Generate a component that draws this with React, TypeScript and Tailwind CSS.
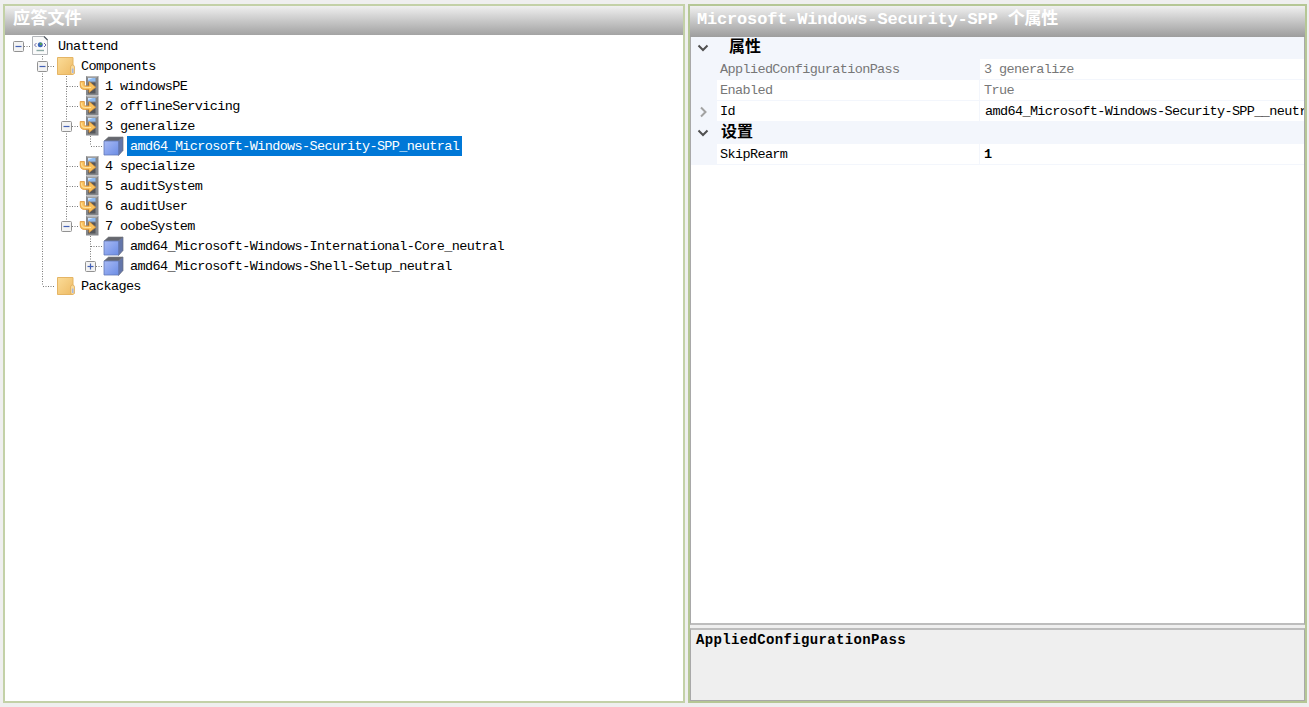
import React from "react";

type Kind = "file" | "folder" | "pass" | "cube";
type Row = {
  label: string;
  icon: Kind;
  /** one entry per 24px gutter column: v = through line, t = tee, l = corner, h = horizontal only */
  cols: string[];
  box?: "-" | "+";
  selected?: boolean;
};

const rows: Row[] = [
  { label: "Unattend", icon: "file", cols: ["h"], box: "-" },
  { label: "Components", icon: "folder", cols: ["", "t"], box: "-" },
  { label: "1 windowsPE", icon: "pass", cols: ["", "v", "t"] },
  { label: "2 offlineServicing", icon: "pass", cols: ["", "v", "t"] },
  { label: "3 generalize", icon: "pass", cols: ["", "v", "t"], box: "-" },
  { label: "amd64_Microsoft-Windows-Security-SPP_neutral", icon: "cube", cols: ["", "v", "v", "l"], selected: true },
  { label: "4 specialize", icon: "pass", cols: ["", "v", "t"] },
  { label: "5 auditSystem", icon: "pass", cols: ["", "v", "t"] },
  { label: "6 auditUser", icon: "pass", cols: ["", "v", "t"] },
  { label: "7 oobeSystem", icon: "pass", cols: ["", "v", "l"], box: "-" },
  { label: "amd64_Microsoft-Windows-International-Core_neutral", icon: "cube", cols: ["", "v", "", "t"] },
  { label: "amd64_Microsoft-Windows-Shell-Setup_neutral", icon: "cube", cols: ["", "v", "", "l"], box: "+" },
  { label: "Packages", icon: "folder", cols: ["", "l"] },
];

function Gutter({ kind, box }: { kind: string; box?: "-" | "+" }) {
  const line = { stroke: "#777", strokeWidth: 1, strokeDasharray: "1 1.5" };
  return (
    <svg width="24" height="20" className="block shrink-0">
      {(kind === "v" || kind === "t") && <line x1="11.5" y1="0" x2="11.5" y2="20" {...line} />}
      {kind === "l" && <line x1="11.5" y1="0" x2="11.5" y2="10" {...line} />}
      {kind !== "" && kind !== "v" && <line x1="12" y1="10.5" x2="26" y2="10.5" {...line} />}
      {box && (
        <g>
          <rect x="6.5" y="5.5" width="10" height="10" rx="1" fill="#f3f3f3" stroke="#929292" />
          <path d="M8.5 10.5h6" stroke="#4361b5" strokeWidth="1.2" />
          {box === "+" && <path d="M11.5 7.5v6" stroke="#4361b5" strokeWidth="1.2" />}
        </g>
      )}
    </svg>
  );
}

function Icon({ kind }: { kind: Kind }) {
  return (
    <svg width="21" height="20" viewBox="0 0 21 20" className="block shrink-0">
      {kind === "file" && (
        <g>
          <path d="M1.5 .5h12l3 3v15h-15z" fill="#fafafa" stroke="#b3b6ba" />
          <path d="M13 .5l3.500 3.500" fill="none" stroke="#555d66" strokeWidth="1.200" />
          <path d="M5.500 7L3.500 9l2 2M13 7l2 2-2 2" fill="none" stroke="#6c6aa8" />
          <circle cx="9.300" cy="8.800" r="2.500" fill="#3a64bd" />
          <circle cx="9.800" cy="8" r="1.200" fill="#55a44e" />
          <path d="M5.500 14.500h7.500" stroke="#8ba9a5" strokeWidth="1.400" />
        </g>
      )}
      {kind === "folder" && (
        <g>
          <defs>
            <linearGradient id="folder" x1="0" y1="0" x2="1" y2="1">
              <stop offset="0" stopColor="#fbdc98" />
              <stop offset="1" stopColor="#eebb65" />
            </linearGradient>
          </defs>
          <path d="M2.500 1.500H18V18.500H2.500z" fill="url(#folder)" stroke="#e5b565" />
          <path d="M15.500 17.500V11q0-2 2-2t2 2v6.500l-2 1z" fill="#f8d999" stroke="#dfad5e" strokeWidth=".8" />
          <path d="M17.700 12.500v4.500" stroke="#a5b6de" strokeWidth="1.600" />
        </g>
      )}
      {kind === "pass" && (
        <g>
          <path d="M7 0h12.500v19.500H7z" fill="#85878a" />
          <path d="M7 0h12.500l-2 1.500H9z" fill="#b9b9b9" />
          <path d="M9 2h7.500v3.500H9z" fill="#8dbbf2" />
          <path d="M9 2h5L9 4z" fill="#d2e6ff" />
          <path d="M9 6.500h7.500v11H9z" fill="#55575b" />
          <path d="M1.200 5.500h4.200v3q0 1.500 1.500 1.500h3.100V5.500l6.800 5.700-6.800 5.300v-3H5.700Q1.200 13.500 1.200 9z" fill="#f9c25e" stroke="#db9337" strokeWidth=".8" strokeLinejoin="round" />
          <path d="M2.700 6.800V9q0 2.200 2.700 2.500h6.600" fill="none" stroke="#ffe2a0" />
        </g>
      )}
      {kind === "cube" && (
        <g>
          <defs>
            <linearGradient id="cube" x1="0" y1="0" x2="1" y2="1">
              <stop offset="0" stopColor="#a8baf5" />
              <stop offset="1" stopColor="#6c8de5" />
            </linearGradient>
          </defs>
          <path d="M1 5L5.500 1H20l-4.500 4z" fill="#65676e" stroke="#777a82" strokeWidth=".6" />
          <path d="M15.500 5L20 1v13.500l-4.500 5z" fill="#6476aa" stroke="#686d7d" strokeWidth=".7" />
          <path d="M1 5h14.500v14H1z" fill="url(#cube)" stroke="#6278b8" strokeWidth=".8" />
        </g>
      )}
    </svg>
  );
}

function Chevron({ open }: { open: boolean }) {
  return (
    <svg width="12" height="12" className="block" fill="none" strokeWidth="2">
      {open ? <path d="M1.500 3.500L6 8l4.500-4.500" stroke="#505050" /> : <path d="M4 1.500L8.500 6 4 10.500" stroke="#a2a2a2" />}
    </svg>
  );
}

const mono = "font-['Liberation_Mono','Noto_Sans_CJK_SC',monospace] whitespace-pre";
const body = mono + " text-[13.5px] tracking-[-0.62px]";

function Category({ title, pad }: { title: string; pad: string }) {
  return (
    <div className="flex h-[22px] shrink-0 items-center bg-[#f3f6fc]">
      <div className="flex w-[26px] shrink-0 pl-[6px]"><Chevron open /></div>
      <span className={mono + " text-[16px] leading-[20px] font-bold text-black " + pad}>{title}</span>
    </div>
  );
}

function Property({ name, value, tone = "text-black", nameBg = "bg-white", valueClass = "pl-[4px]", expand = false }: {
  name: string; value: string; tone?: string; nameBg?: string; valueClass?: string; expand?: boolean;
}) {
  return (
    <div className={"flex h-[21px] shrink-0 " + body + " leading-[21px] " + tone}>
      <div className="flex w-[26px] shrink-0 items-center bg-[#f3f6fc] pl-[6px]">{expand && <Chevron open={false} />}</div>
      <div className={"w-[263px] shrink-0 border-r border-b border-[#f3f6fc] pl-[3px] " + nameBg}>{name}</div>
      <div className={"min-w-0 flex-1 overflow-hidden border-b border-[#f3f6fc] bg-white " + valueClass}>{value}</div>
    </div>
  );
}

export default function App() {
  return (
    <div className="flex h-[707px] w-[1309px] gap-[3px] overflow-hidden bg-[#efefef] pt-[4px] pr-[2px] pb-[4px] pl-[3px]">
      <section className="flex w-[682px] shrink-0 flex-col border-2 border-[#c3d1a7] bg-white">
        <header className="h-[29px] shrink-0 bg-linear-to-b from-[#f0f0f0] to-[#a3a3a3] pl-[8px]">
          <h1 className={mono + " text-[17.2px] leading-[27px] font-bold text-white"}>应答文件</h1>
        </header>
        <div className="flex flex-col pt-px pl-[2px]">
          {rows.map((r) => (
            <div key={r.label} className="flex h-[20px] items-center">
              {r.cols.map((c, i) => (
                <Gutter key={i} kind={c} box={i === r.cols.length - 1 ? r.box : undefined} />
              ))}
              <Icon kind={r.icon} />
              <span className={body + " h-[20px] px-[3px] leading-[21px] " + (r.icon === "file" || r.icon === "cube" ? "ml-[3px] " : "ml-[2px] ") + (r.selected ? "bg-[#0078d7] text-white" : "text-black")}>
                {r.label}
              </span>
            </div>
          ))}
        </div>
      </section>

      <section className="flex min-w-0 flex-1 flex-col border-2 border-[#b5c795] bg-[#efefef]">
        <header className="h-[31px] shrink-0 bg-linear-to-b from-[#f0f0f0] to-[#9d9d9d] pl-[7px]">
          <h2 className={mono + " text-[17px] leading-[28px] font-bold tracking-[-0.18px] text-white"}>Microsoft-Windows-Security-SPP 个属性</h2>
        </header>
        <div className="flex h-[588px] shrink-0 flex-col border-x border-b-2 border-x-[#a9a9a9] border-b-[#bdbdbd] bg-white">
          <Category title="属性" pad="pl-[12px]" />
          <Property name="AppliedConfigurationPass" value="3 generalize" tone="text-[#777]" nameBg="bg-[#f3f6fc]" />
          <Property name="Enabled" value="True" tone="text-[#777]" />
          <Property name="Id" value="amd64_Microsoft-Windows-Security-SPP__neutral" valueClass="pl-[5px]" expand />
          <Category title="设置" pad="pl-[4px]" />
          <Property name="SkipRearm" value="1" valueClass="pl-[4px] font-bold" />
        </div>
        <div className="mt-[3px] min-h-0 flex-1 border border-t-2 border-[#a9a9a9] border-t-[#bdbdbd] pl-[5px]">
          <p className={mono + " text-[14px] leading-[21px] font-bold tracking-[0.35px] text-black"}>AppliedConfigurationPass</p>
        </div>
      </section>
    </div>
  );
}
